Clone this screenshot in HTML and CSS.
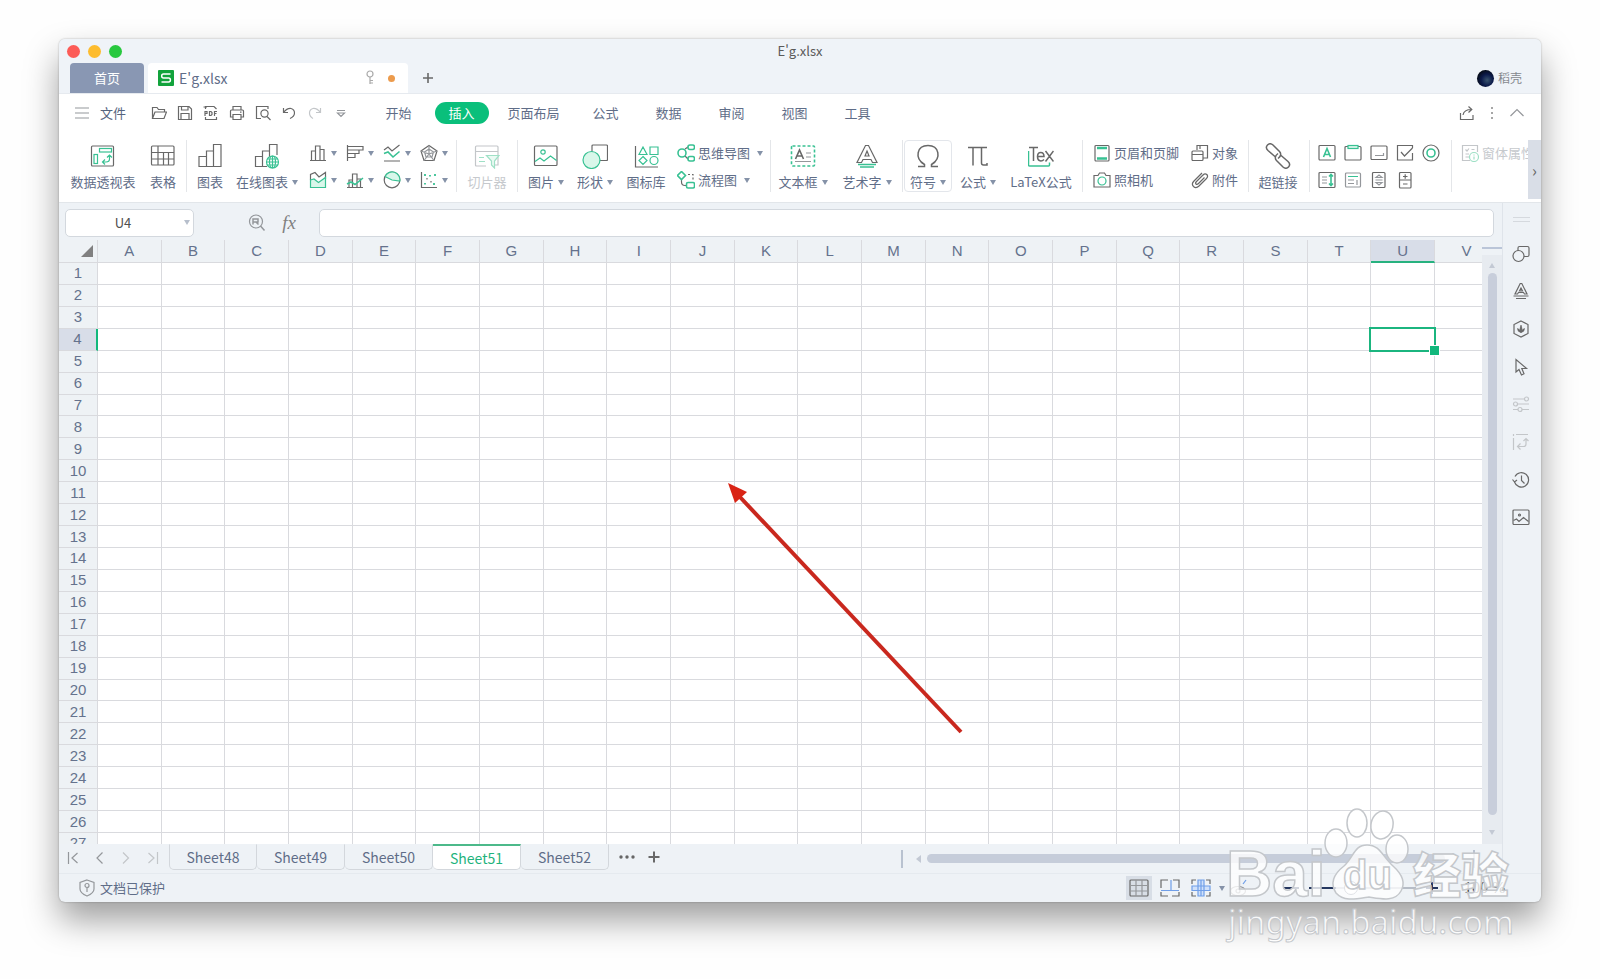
FILE: index.html
```html
<!DOCTYPE html>
<html lang="zh-CN">
<head>
<meta charset="utf-8">
<title>E'g.xlsx</title>
<link rel="stylesheet" href="styles.css">
</head>
<body>
<div class="window">
  <header class="titlebar">
    <div class="lights"><i class="light red"></i><i class="light yellow"></i><i class="light green"></i></div>
    <h1 class="title">E'g.xlsx</h1>
  </header>

  <div class="doc-tabs">
    <button class="home-tab">首页</button>
    <div class="file-tab">
      <svg class="logo" viewBox="0 0 16 16"><rect width="16" height="16" rx="1" fill="#12a33c"/><path d="M12.500 4H5.500Q3.700 4 3.700 6T5.500 8H10.700Q12.400 8 12.400 10T10.700 12H3.500" fill="none" stroke="#fff" stroke-width="1.500"/></svg>
      <span class="file-name">E'g.xlsx</span>
      <svg class="key" viewBox="0 0 10 16"><circle cx="5" cy="4" r="3"/><path d="M5 7V14M5 10.500H8M5 13H8"/></svg>
      <i class="unsaved"></i>
    </div>
    <button class="new-tab" aria-label="新建"><svg class="ic" width="12" height="12" viewBox="0 0 12 12"><path d="M6 1V11M1 6H11" stroke-width="1.600"/></svg></button>
    <button class="account"><i class="avatar"></i>稻壳</button>
  </div>

  <nav class="menubar">
    <button class="file-menu"><svg class="ic soft" width="16" height="14" viewBox="0 0 16 14"><path d="M1 2H15M1 7H15M1 12H15"/></svg>文件</button>
    <div class="quick">
      <button aria-label="打开"><svg class="ic" viewBox="0 0 16 16"><path d="M1.500 13.500V2.500H6L7.500 4.500H13.500V7M1.500 13.500L4 7H15.500L13 13.500Z"/></svg></button>
      <button aria-label="保存"><svg class="ic" viewBox="0 0 16 16"><path d="M1.500 1.500H12L14.500 4V14.500H1.500ZM4.500 1.500V5H11V1.500M4 14.500V8.500H12V14.500"/></svg></button>
      <button aria-label="输出为PDF"><svg class="ic" viewBox="0 0 16 16"><path d="M2.500 4V1.500H11L13.500 4M2.500 12V14.500H13.500V12M0.500 2H4M2 6V11M2 6.500H4V8.500H2M6.500 6.500V10.500H8L9 9.500V7.500L8 6.500ZM11.500 11V6.500H14M11.500 8.500H13.500"/></svg></button>
      <button aria-label="打印"><svg class="ic" viewBox="0 0 16 16"><path d="M4 5V1.500H12V5M4 12H1.500V6Q1.500 5 2.500 5H13.500Q14.500 5 14.500 6V12H12M4 9.500H12V14.500H4ZM11 7.200H12.500"/></svg></button>
      <button aria-label="打印预览"><svg class="ic" viewBox="0 0 16 16"><path d="M6 13.500H1.500V1.500H13V4M12 11.500L15.500 15"/><circle cx="9.500" cy="8.500" r="3.600"/></svg></button>
      <button aria-label="撤销"><svg class="ic" viewBox="0 0 16 16"><path d="M2.500 3V7.500H7M2.500 7.500Q6 3 10 3.500Q13.500 4.500 13.500 8T9 13.500"/></svg></button>
      <button aria-label="恢复"><svg class="ic faint" viewBox="0 0 16 16"><path d="M13.500 3V7.500H9M13.500 7.500Q10 3 6 3.500Q2.500 4.500 2.500 8T6 13.500"/></svg></button>
      <button aria-label="更多"><svg class="ic soft" viewBox="0 0 16 16"><path d="M4 5.500H12M4.500 8L8 11.500L11.500 8Z"/></svg></button>
    </div>
    <div class="menus">
      <button class="menu">开始</button><button class="menu active"><span>插入</span></button><button class="menu wide">页面布局</button><button class="menu">公式</button><button class="menu">数据</button><button class="menu">审阅</button><button class="menu">视图</button><button class="menu">工具</button>
    </div>
    <div class="menu-right">
      <button aria-label="分享"><svg class="ic" width="16" height="16" viewBox="0 0 16 16"><path d="M1.500 8V14.500H14V10M4 10Q5 4.500 12.500 4.500M9.500 1.500L12.800 4.500L9.500 7.500"/></svg></button>
      <button aria-label="选项"><svg width="4" height="16" viewBox="0 0 4 16" fill="#888"><circle cx="2" cy="3" r="1"/><circle cx="2" cy="8" r="1"/><circle cx="2" cy="13" r="1"/></svg></button>
      <button aria-label="收起"><svg class="ic soft" width="16" height="16" viewBox="0 0 16 16"><path d="M1.500 11L8 4.500L14.500 11"/></svg></button>
    </div>
  </nav>

  <div class="ribbon">
    <div class="group g-table">
      <button class="tool w76"><svg class="ic" viewBox="0 0 26 26"><rect x="1.500" y="3" width="22" height="20" rx="1"/><g class="grn"><rect x="9.500" y="5.500" width="12" height="3.500"/><rect x="4" y="11.500" width="3.500" height="9"/><path d="M19.500 12.500V16Q19.500 19 16 19H12.500M17 14.500L19.500 12L22 14.500M15 16.500L12.500 19L15 21.500"/></g></svg><span>数据透视表</span></button>
      <button class="tool w44"><svg class="ic" viewBox="0 0 26 26"><rect x="1.500" y="3" width="22.500" height="19" rx="1"/><path d="M1.500 9.500H24M1.500 16H24M8 3V22M13.500 9.500V22M18.500 9.500V22"/></svg><span>表格</span></button>
    </div>
    <div class="group g-chart">
      <button class="tool w46"><svg class="ic" viewBox="0 0 26 26"><path d="M2 13.500H9.500V23.500H2ZM9.500 8H16.500V23.500H9.500ZM16.500 1.500H24V23.500H16.500Z"/></svg><span>图表</span></button>
      <button class="tool w68"><svg class="ic" viewBox="0 0 26 26"><path d="M13 23.500H1.500V13.500H8.500V23M8.500 13V8H15.500V14M15.500 8V1.500H23V12"/><g class="grn"><circle cx="18.500" cy="19" r="6" fill="#fff"/><path d="M12.500 19H24.500M18.500 13V25M13.500 16H23.500M13.500 22H23.500"/><ellipse cx="18.500" cy="19" rx="3" ry="6"/></g></svg><span class="dd">在线图表</span></button>
      <div class="chart-grid">
        <button class="dd" aria-label="柱形图"><svg class="ic" viewBox="0 0 18 18"><path d="M1 16.500H17M2.500 16.500V7H6.500V16.500M6.500 16.500V2H11V16.500M11 5.500H15V16.500"/></svg></button>
        <button class="dd" aria-label="条形图"><svg class="ic" viewBox="0 0 18 18"><path d="M1.500 1V17M1.500 2.500H17V6H1.500M13 6V9.500H1.500M9 9.500V13.500H1.500"/></svg></button>
        <button class="dd" aria-label="折线图"><svg class="ic" viewBox="0 0 18 18"><path d="M1 6L5 3L9 7L16.500 1M1 17H17"/><path class="grn" d="M1 9.500L5 8L10 13L16.500 7.500" stroke-width="1.600"/></svg></button>
        <button class="dd" aria-label="雷达图"><svg class="ic" viewBox="0 0 18 18"><path d="M9 1.500L17 7L14 16.500H4L1 7Z"/><path class="soft" d="M9 5L13.500 8L12 13H6L4.500 8ZM9 1.500V10M17 7L9 10L14 16.500M1 7L9 10L4 16.500"/></svg></button>
        <button class="dd" aria-label="面积图"><svg class="ic" viewBox="0 0 18 18"><path d="M1.500 9V3.500L6 1.500L10 6L16.500 1.500V8"/><path class="grn" fill="#d9f7ea" d="M1.500 9L5 8L9.500 11.500L16.500 6.500V16.500H1.500Z"/></svg></button>
        <button class="dd" aria-label="组合图"><svg class="ic" viewBox="0 0 18 18"><path d="M1 16.500H17M3 16.500V9H6.500V16.500M6.500 12V3H11V16.500M11 8H14.500V16.500"/><path class="grn" d="M1 13L5 11L9 13.500L17 7" stroke-width="1.600"/></svg></button>
        <button class="dd" aria-label="饼图"><svg class="ic" viewBox="0 0 18 18"><circle cx="9" cy="9" r="7.800"/><path class="grn" fill="#d9f7ea" d="M2 5.500L9 9L16.800 10A7.800 7.800 0 0 0 2 5.500"/></svg></button>
        <button class="dd" aria-label="散点图"><svg class="ic" viewBox="0 0 18 18"><path d="M1.500 1V16.500H17M7 7V8.500M11 10V11.500"/><path class="grn" d="M5 3V5M15 3V5M5 12V13.500M10 4V5.500M14 12V14" stroke-width="1.800"/></svg></button>
      </div>
    </div>
    <div class="group g-slicer">
      <button class="tool w60 off" disabled><svg class="ic faint" viewBox="0 0 26 26"><path d="M12 23H2.500Q1.500 23 1.500 22V4Q1.500 3 2.500 3H23Q24 3 24 4V22H20M1.500 8.500H24"/><path class="grnf" fill="#eafaf3" d="M12.500 12.500H25L20.500 18V25L17.500 22V18Z"/><path class="grnf" d="M5 14.500H10M5 18.500H11"/></svg><span>切片器</span></button>
    </div>
    <div class="group g-insert">
      <button class="tool w48"><svg class="ic" viewBox="0 0 26 26"><rect x="1.500" y="3" width="22.500" height="19.500" rx="1"/><g class="grn"><circle cx="10" cy="9" r="2.200"/><path d="M2 18.500L7 15L11 18L17.500 13L23.500 17.500"/></g></svg><span class="dd">图片</span></button>
      <button class="tool w50"><svg class="ic" viewBox="0 0 26 26"><rect x="10" y="2" width="15.500" height="15.500" rx="1"/><circle class="grn" cx="9.500" cy="17" r="8.500" fill="#d9f7ea"/></svg><span class="dd">形状</span></button>
      <button class="tool w52"><svg class="ic" viewBox="0 0 26 26"><path d="M2.500 3V24H25"/><g class="grn"><path d="M10 4L14 11.500H6ZM17 4H25V11.500H17ZM10 13.500L14 17.500L10 21.500L6 17.500Z"/><circle cx="21" cy="17.500" r="4"/></g></svg><span>图标库</span></button>
      <div class="mini-list">
        <button><svg class="ic" viewBox="0 0 18 18"><path d="M8 5L11 3M8 12L11 15"/><g class="grn bold"><circle cx="5" cy="9" r="4"/><rect x="11" y="1" width="6.500" height="4.500" rx="2"/><rect x="11" y="12.500" width="6.500" height="4.500" rx="2"/></g></svg><span class="dd far">思维导图</span></button>
        <button><svg class="ic" viewBox="0 0 18 18"><path d="M4.500 8V11Q4.500 14.500 8 14.500H9"/><path d="M11 3.500H16V9" stroke-dasharray="2 2"/><g class="grn bold"><path d="M4.500 0.500L8.500 4.500L4.500 8.500L0.500 4.500Z"/><rect x="9.500" y="11.500" width="8" height="5.500" rx="1.500"/></g></svg><span class="dd far">流程图</span></button>
      </div>
    </div>
    <div class="group g-text">
      <button class="tool w64"><svg class="ic" viewBox="0 0 26 26"><rect class="grn" x="1.500" y="3" width="23" height="20" rx="1" stroke-width="1.600" stroke-dasharray="3 2"/><path d="M5.500 16L9.500 7L13.500 16M7 13H12" stroke-width="1.600"/><path class="soft" d="M16 10H21M16 14H21M5 18.500H21"/></svg><span class="dd">文本框</span></button>
      <button class="tool w64"><svg class="ic" viewBox="0 0 26 26"><path d="M11.500 2.500H14.500L23 19.500H18.500L17 16.500H9L7.500 19.500H3ZM13 8L15 13H11Z"/><path class="grn" d="M4 21.500H22M6 24H20" stroke-width="1.600"/></svg><span class="dd">艺术字</span></button>
    </div>
    <div class="group g-symbol">
      <button class="tool w48 boxed"><svg class="ic" viewBox="0 0 26 26"><path d="M3 23.500H9.500V21.500C-1 15 2 2.500 13 2.500S27 15 16.500 21.500V23.500H23" stroke-width="1.500"/></svg><span class="dd">符号</span></button>
      <button class="tool w52"><svg class="ic" viewBox="0 0 26 26"><path d="M3 4.500H22M8 4.500V22.500M16.500 4.500V20Q16.500 22 18.500 22H22V20" stroke-width="1.500"/></svg><span class="dd">公式</span></button>
      <button class="tool w74"><svg class="ic" viewBox="0 0 26 26"><path class="grn" d="M0.500 8V22Q0.500 23 1.500 23H20.500Q21.500 23 21.500 22V19.500" stroke-width="1.500"/><path d="M1 4.500H10M5.500 4.500V18M9.500 13.500H16C16 8 9.500 8 9.500 13.500S14 18.500 16 16.500M17.500 8L25.500 18.500M25.500 8L17.500 18.500" stroke-width="1.500"/></svg><span>LaTeX公式</span></button>
    </div>
    <div class="group g-page">
      <div class="mini-list">
        <button><svg class="ic" viewBox="0 0 18 18"><rect x="2" y="1.500" width="14" height="15.500" rx="1"/><path class="grn" d="M4 4H14M4 14.500H14" stroke-width="2.500"/></svg><span>页眉和页脚</span></button>
        <button><svg class="ic" viewBox="0 0 18 18"><path d="M1 4.500H5L6.500 2H11.500L13 4.500H17V16H1Z"/><circle class="grn" cx="9" cy="10" r="4"/></svg><span>照相机</span></button>
      </div>
      <div class="mini-list objects">
        <button><svg class="ic" viewBox="0 0 18 18"><path d="M6 6V1.500H16.500V14H12M9 1.500V5"/><rect x="1" y="7" width="11" height="9.500" rx="1"/><path d="M1 10.500H12"/></svg><span>对象</span></button>
        <button><svg class="ic" viewBox="0 0 18 18"><path d="M13.500 6.500L7.500 12.500Q6 14 5 13Q4 12 5.500 10.500L12 4Q14 2 15.800 3.500Q17.500 5.500 15.500 7.500L8 15Q5 17.800 2.500 15.500Q0 13 3 10L11 2"/></svg><span>附件</span></button>
      </div>
    </div>
    <div class="group g-link">
      <button class="tool w58"><svg class="ic" viewBox="0 0 26 26"><path d="M10.500 14L3 7.500Q0 4.500 2.500 2Q5 -0.500 8 2L14.500 8.500Q17.500 12 13 15.500M15.500 12L23 18.500Q26 21.500 23.500 24Q21 26.500 18 24L11.500 17.500Q8.500 14 13 10.500" stroke-width="1.500"/></svg><span>超链接</span></button>
    </div>
    <div class="group g-form">
      <div class="form-grid">
        <button aria-label="标签"><svg class="ic" viewBox="0 0 18 18"><rect x="1" y="1.500" width="16" height="14.500" rx="1"/><path class="grn" d="M5.500 13L9 4.500L12.500 13M6.500 10.500H11.500" stroke-width="1.600"/></svg></button>
        <button aria-label="分组框"><svg class="ic" viewBox="0 0 18 18"><rect x="1" y="2.500" width="16" height="13.500" rx="1"/><rect class="grn" x="4" y="1.500" width="10" height="3" fill="#d9f7ea"/></svg></button>
        <button aria-label="按钮"><svg class="ic" viewBox="0 0 18 18"><rect x="1" y="2" width="16" height="13.500" rx="1"/><path class="soft" d="M5 11.500H13.500V9"/></svg></button>
        <button aria-label="复选框"><svg class="ic" viewBox="0 0 18 18"><path d="M16.500 9V16H1.500V1.500H16.500V4M5 8L8.500 12L16.500 4"/></svg></button>
        <button aria-label="选项按钮"><svg class="ic" viewBox="0 0 18 18"><circle cx="9" cy="9" r="8"/><circle class="grn" cx="9" cy="9" r="4" stroke-width="1.600"/></svg></button>
        <button aria-label="列表框"><svg class="ic" viewBox="0 0 18 18"><rect x="1" y="1.500" width="16" height="15" rx="1"/><path class="soft" d="M4 6H9M4 9H9M4 12H9"/><path class="grn" d="M13 3.500V14.500M11 5.500L13 3.500L15 5.500M11 12.500L13 14.500L15 12.500" stroke-width="1.600"/></svg></button>
        <button aria-label="组合框"><svg class="ic soft" viewBox="0 0 18 18"><rect x="1.500" y="2" width="15" height="14" rx="1"/><path d="M4 9H10M4 12.500H10M13 9V14"/><path class="grn" d="M4 5.500H14"/></svg></button>
        <button aria-label="滚动条"><svg class="ic" viewBox="0 0 18 18"><rect x="2.500" y="1.500" width="12.500" height="15" rx="1"/><path class="soft" d="M6 6.500L9 4L12 6.500ZM6 11.500L9 14L12 11.500ZM5.500 9H12.500"/></svg></button>
        <button aria-label="微调项"><svg class="ic" viewBox="0 0 18 18"><rect x="3.500" y="1.500" width="11.500" height="15.500" rx="1"/><path d="M3.500 9H15M7 5.500H11.500M9.200 3.200V7.800M7 13H11.500"/></svg></button>
      </div>
    </div>
    <div class="group g-props">
      <div class="mini-list">
        <button class="off" disabled><svg class="ic faint" viewBox="0 0 18 18"><path d="M9 16.500H1.500V1.500H16.500V8M4.500 5.500L6 7L8 4.500M10.500 5.500H13.500M4.500 10H8M4.500 13H8"/><circle class="grnf" cx="13" cy="13" r="4.500" fill="#fff"/><path class="grnf" d="M13 12.500V15.500M13 10.500V11.500"/></svg><span>窗体属性</span></button>
      </div>
    </div>
    <button class="ribbon-next" aria-label="向右滚动">›</button>
  </div>

  <div class="body">
    <main class="main">
      <div class="formula-bar">
        <div class="name-box"><input type="text" value="U4" aria-label="名称框"><i class="tri"></i></div>
        <button class="find" aria-label="查找"><svg class="ic soft" width="18" height="18" viewBox="0 0 18 18"><circle cx="8" cy="7.500" r="6.500"/><path d="M5 10.500V5H10V8H5M8 8L10.500 10.500M12.500 12L16.500 16.500" stroke-width="1.500"/></svg></button>
        <button class="fx" aria-label="插入函数">fx</button>
        <input class="formula" type="text" aria-label="编辑栏">
      </div>
      <div class="sheet-area">
        <div class="sheet">
          <table class="grid" id="grid"></table>
          <svg class="arrow" width="236" height="254" viewBox="0 0 236 254"><path d="M11 13L233 249" stroke="#c9281e" stroke-width="4"/><path d="M0 0L19 9L7 20Z" fill="#d92415"/></svg>
        </div>
        <div class="vscroll"><i class="split-line"></i><div class="vtrack"><i class="tri up"></i><i class="vthumb"></i><i class="tri"></i></div></div>
      </div>
      <div class="sheet-bar">
        <div class="sheet-nav">
          <button aria-label="第一张"><svg class="ic soft" viewBox="0 0 12 14"><path d="M1.500 1V13M10.500 2L5 7L10.500 12"/></svg></button>
          <button aria-label="上一张"><svg class="ic soft" viewBox="0 0 12 14"><path d="M8.500 1.500L3 7L8.500 12.500"/></svg></button>
          <button aria-label="下一张"><svg class="ic faint" viewBox="0 0 12 14"><path d="M3 1.500L8.500 7L3 12.500"/></svg></button>
          <button aria-label="最后一张"><svg class="ic faint" viewBox="0 0 12 14"><path d="M10.500 1V13M1.500 2L7 7L1.500 12"/></svg></button>
        </div>
        <div class="sheets"><button>Sheet48</button><button>Sheet49</button><button>Sheet50</button><button class="current">Sheet51</button><button>Sheet52</button></div>
        <button class="more" aria-label="更多工作表"><svg width="18" height="4" viewBox="0 0 18 4" fill="#666"><circle cx="3" cy="2" r="1.700"/><circle cx="9" cy="2" r="1.700"/><circle cx="15" cy="2" r="1.700"/></svg></button>
        <button class="add" aria-label="新建工作表"><svg class="ic" width="12" height="12" viewBox="0 0 12 12"><path d="M6 0.500V11.500M0.500 6H11.500" stroke-width="2"/></svg></button>
        <div class="hscroll"><i class="bar"></i><i class="tri left"></i><i class="hthumb"></i><i class="bar end"></i></div>
      </div>
    </main>
    <aside class="sidebar">
      <i class="grip"></i>
      <div class="side-tools">
        <button aria-label="形状"><svg class="ic" viewBox="0 0 18 18"><path d="M6 6V3Q6 1.500 7.500 1.500H15.500Q17 1.500 17 3V10Q17 11.500 15.500 11.500H12"/><circle cx="6.500" cy="11" r="5.500"/></svg></button>
        <button aria-label="艺术字"><svg class="ic" viewBox="0 0 18 18"><path d="M8.200 1.500H9.800L15 12H12.500L11.500 10.500H6.500L5.500 12H3ZM9 6L10.500 9H7.500ZM1.500 14H16.500M4 16.500H14"/></svg></button>
        <button aria-label="样式"><svg class="ic" viewBox="0 0 18 18"><path d="M9 1L16 4.500V13.500L9 17L2 13.500V4.500Z"/><path d="M9 12.500Q7 9 9 5Q11 9 9 12.500Q5.500 12 5.500 8.500Q8 9 9 12.500Q12.500 12 12.500 8.500Q10 9 9 12.500" fill="#666" stroke-width="0.600"/></svg></button>
        <button aria-label="选择"><svg class="ic" viewBox="0 0 18 18"><path d="M4 1.500V14L7 11.500L9.500 17L12 15.800L9.800 10.500H14.500Z"/></svg></button>
        <button aria-label="筛选" disabled><svg class="ic faint" viewBox="0 0 18 18"><path d="M1 4H12.500M5.500 9H17M1 9H1.500M1 14.500H6M10 14.500H17"/><circle cx="14.500" cy="4" r="2"/><circle cx="3.500" cy="9" r="2"/><circle cx="8" cy="14.500" r="2"/></svg></button>
        <button aria-label="透视表" disabled><svg class="ic faint" viewBox="0 0 18 18"><path d="M1.500 1V3M4 1.500H16M1.500 5V17M14 6V11Q14 13.500 11.500 13.500H6M11.500 8L14 5.500L16.500 8M8.500 10.500L5.500 13.500L8.500 16.500"/></svg></button>
        <button aria-label="历史"><svg class="ic" viewBox="0 0 18 18"><path d="M2.500 11A7.200 7.200 0 1 0 3 5.500M0.500 8.500L2.500 11L5 9M9.500 4.500V9.500L12.500 12.500"/></svg></button>
        <button aria-label="图片"><svg class="ic" viewBox="0 0 18 18"><rect x="1" y="2" width="16" height="14.500" rx="1"/><circle cx="7.500" cy="7" r="1"/><path d="M1.500 12.500L4.500 11L7 13.500L11.500 9.500L16.500 13.500"/></svg></button>
      </div>
    </aside>
  </div>

  <footer class="status">
    <svg class="ic soft shield" width="16" height="18" viewBox="0 0 16 18"><path d="M8 1L15 3.500V10Q15 14 8 17Q1 14 1 10V3.500ZM8 8.500V13"/><circle cx="8" cy="6.500" r="2"/></svg>
    <span>文档已保护</span>
    <div class="views">
      <button class="view on" aria-label="普通视图"><svg class="ic" width="20" height="18" viewBox="0 0 20 18"><rect x="1" y="1" width="18" height="16" rx="1"/><path class="soft" d="M1 6.500H19M1 12H19M7 1V17M13 1V17"/></svg></button>
      <button class="view" aria-label="分页预览"><svg class="ic" width="20" height="18" viewBox="0 0 20 18"><path d="M8 1H1V9M1 13V17H8M12 17H19V13M19 9V1H13"/><path class="blu" d="M11 1V11.500M1 11.500H19"/></svg></button>
      <button class="view" aria-label="阅读模式"><svg class="ic" width="20" height="18" viewBox="0 0 20 18"><path d="M5 1H1V5M1 13V17H5M15 1H19V5M19 13V17H15"/><path class="blu" fill="#cfe0fa" d="M7 1H13V17H7ZM1 7H19V11.500H1ZM10 1V17"/></svg></button>
      <i class="tri"></i>
      <button class="eye" aria-label="护眼模式"><svg class="ic soft" width="18" height="18" viewBox="0 0 18 18"><ellipse cx="8" cy="12" rx="7.500" ry="4.500"/><circle cx="8" cy="12" r="2"/><path class="blu" d="M13 5L16 1"/></svg></button>
    </div>
    <div class="zoom">
      <button aria-label="缩小"><svg width="16" height="12" viewBox="0 0 16 12"><path d="M0 6H16" stroke="#24365f" stroke-width="2"/></svg></button>
      <input type="range" min="0" max="100" value="38" aria-label="缩放">
      <button aria-label="放大"><svg width="12" height="12" viewBox="0 0 12 12"><path d="M0 6H12M6 0V12" stroke="#24365f" stroke-width="2"/></svg></button>
      <output>100 %</output>
    </div>
  </footer>
</div>

<div class="watermark">
  <svg width="300" height="174" viewBox="0 0 300 174">
    <g class="mark">
      <text class="wm-latin" x="1" y="91">Bai</text>
      <ellipse cx="111" cy="38" rx="11" ry="14"/><ellipse cx="132" cy="18" rx="10" ry="14"/><ellipse cx="157" cy="20" rx="11" ry="14" transform="rotate(12 157 20)"/><ellipse cx="172" cy="44" rx="11" ry="14"/>
      <path d="M142 40C155 40 157 51 168 61C178 70 180 79 176 86C170 97 157 94 144 92C131 94 119 97 111 88C104 77 110 68 119 61C129 52 129 40 142 40Z"/>
      <text class="wm-du" x="118" y="84">du</text>
      <text class="wm-cjk" x="188" y="88">经验</text>
      <text class="wm-url" x="3" y="129">jingyan.baidu.com</text>
    </g>
  </svg>
</div>
<script src="sheet.js"></script>
</body>
</html>
```

FILE: styles.css
```css
* { box-sizing: border-box; }

body {
  margin: 0;
  height: 100vh;
  padding: 39px 59px 77px;
  background: #fefefe;
  font: 13px/18px "Noto Sans CJK SC", sans-serif;
  color: #5f6d88;
  overflow: hidden;
}

button, input {
  font: inherit;
  color: inherit;
  margin: 0;
  padding: 0;
  border: 0;
  background: none;
}

button { display: flex; align-items: center; justify-content: center; white-space: nowrap; flex: none; }
svg { display: block; flex: none; }

.ic { fill: none; stroke: #686868; stroke-width: 1.2; }
.ic.soft, .ic .soft { stroke: #94979b; }
.ic.faint { stroke: #c3c6c9; }
.ic .grn { stroke: #38c193; }
.ic .grnf { stroke: #9fe0c6; }
.ic .blu { stroke: #6f9ee8; }
.ic .bold { stroke-width: 1.6; }

.tri {
  width: 0;
  height: 0;
  border: 3px solid transparent;
  border-top: 5px solid #8592a8;
  border-bottom: 0;
}
.tri.left { border: 4px solid transparent; border-right: 5px solid #c3c9d4; border-left: 0; }

.window {
  display: flex;
  flex-direction: column;
  height: 100%;
  background: #eef2f6;
  border-radius: 6px;
  overflow: hidden;
  box-shadow: 0 0 2px rgba(0, 0, 0, .3), 0 18px 34px rgba(0, 0, 0, .38);
}

/* Title bar and document tabs */
.titlebar { display: grid; grid-template-columns: 1fr auto 1fr; height: 24px; align-items: center; background: #eff3f8; }
.lights { display: flex; gap: 8px; padding-left: 8px; }
.light { width: 13px; height: 13px; border-radius: 50%; }
.red { background: #fc5b57; }
.yellow { background: #fdbc2f; }
.green { background: #28c83f; }
.title { margin: 0; font-size: 13px; font-weight: 400; color: #5a5a5a; }

.doc-tabs { display: flex; align-items: flex-end; height: 31px; padding: 0 19px 0 11px; background: #eff3f8; border-bottom: 1px solid #e6eaef; }
.home-tab { width: 74px; height: 30px; background: #8997b3; color: #fff; border-radius: 4px 4px 0 0; }
.file-tab { display: flex; align-items: center; width: 260px; height: 30px; margin-left: 4px; padding: 0 13px 0 10px; background: #fff; border-radius: 4px 4px 0 0; }
.logo { width: 16px; height: 16px; }
.file-name { flex: 1; margin-left: 5px; font-size: 14px; }
.key { width: 10px; height: 16px; fill: none; stroke: #aaa; stroke-width: 1.2; }
.unsaved { width: 7px; height: 7px; margin-left: 13px; border-radius: 50%; background: #ec9b4d; }
.new-tab { width: 40px; height: 30px; }
.account { height: 30px; gap: 4px; margin-left: auto; font-size: 12px; color: #85888e; }
.avatar { width: 17px; height: 17px; border-radius: 50%; background: radial-gradient(circle at 60% 60%, #39546e 0, #0c1a4a 40%, #050a14 75%); }

/* Menu row */
.menubar { display: flex; align-items: center; height: 38px; padding: 0 16px 0 15px; background: #fff; }
.file-menu { gap: 10px; color: #56647e; }
.quick { display: flex; margin-left: 25px; gap: 10px; }
.quick svg { width: 16px; height: 16px; }
.menus { display: flex; margin-left: 18px; }
.menu { width: 63px; height: 21px; }
.menu.wide { width: 81px; }
.menu.active span { padding: 2px 14px; line-height: 18px; border-radius: 11px; background: #0abf7b; color: #fff; }
.menu-right { display: flex; align-items: center; gap: 15px; margin-left: auto; }

/* Ribbon */
.ribbon { display: flex; height: 71px; padding-top: 8px; background: #fff; border-bottom: 1px solid #e2e6ea; }
.group { display: flex; flex: none; height: 52px; border-right: 1px solid #e4e6e9; }
.tool { flex-direction: column; justify-content: flex-start; gap: 4px; height: 52px; padding-top: 3px; }
.tool svg { width: 26px; height: 26px; }
.w44 { width: 44px; }
.w46 { width: 46px; }
.w48 { width: 48px; }
.w50 { width: 50px; }
.w52 { width: 52px; }
.w58 { width: 58px; }
.w60 { width: 60px; }
.w64 { width: 64px; }
.w68 { width: 68px; }
.w74 { width: 74px; }
.w76 { width: 76px; }
.off { color: #c6c9cd; }
.boxed { border: 1px solid #e3e6eb; border-radius: 4px; padding-top: 2px; }

.dd { display: flex; align-items: center; }
.dd::after { content: ""; margin-left: 4px; border: 3px solid transparent; border-top: 5px solid #8592a8; border-bottom: 0; }
.dd.far::after { margin-left: 7px; }

.g-table { width: 128px; padding-left: 6px; }
.g-chart { width: 270px; }
.g-slicer { width: 61px; }
.g-insert { width: 253px; padding-left: 4px; }
.g-text { width: 132px; }
.g-symbol { width: 180px; padding-left: 1px; }
.g-page { width: 166px; padding-left: 10px; }
.g-link { width: 61px; }
.g-form { width: 142px; padding-left: 8px; }
.g-props { flex: 1 1 0; width: 0; padding-left: 9px; border-right: 0; overflow: hidden; }

.chart-grid { display: grid; grid-template-columns: repeat(4, 27px); gap: 1px 10px; grid-auto-rows: 26px; margin-left: 8px; }
.chart-grid svg, .form-grid svg, .mini-list svg { width: 18px; height: 18px; }
.chart-grid .dd::after { margin-left: 4px; }
.mini-list { display: grid; grid-auto-rows: 26px; gap: 1px; justify-items: start; align-content: start; margin-left: 5px; }
.mini-list button { gap: 3px; }
.g-page .mini-list, .g-props .mini-list { margin-left: 0; }
.g-page .objects { margin-left: 12px; }
.form-grid { display: grid; grid-template-columns: repeat(5, 18px); gap: 1px 8px; grid-auto-rows: 26px; }
.ribbon-next { width: 13px; height: 59px; background: #d9dee7; font-size: 16px; color: #666; }

/* Workspace */
.body { display: flex; flex: 1; min-height: 0; }
.main { display: flex; flex-direction: column; flex: 1; min-width: 0; }
.formula-bar { display: flex; align-items: center; height: 37px; padding: 2px 8px 0 6px; }
.name-box { display: flex; align-items: center; width: 129px; height: 28px; padding-right: 3px; background: #fff; border: 1px solid #d3d8de; border-radius: 5px; }
.name-box input { flex: 1; min-width: 0; padding-right: 4px; text-align: center; font-size: 13px; color: #505050; }
.name-box .tri { border-top-color: #b7bfcc; }
.find { margin-left: 54px; }
.fx { width: 32px; margin-left: 7px; font: italic 19px/24px "Liberation Serif", serif; color: #808080; }
.formula { flex: 1; height: 28px; margin-left: 14px; padding: 0 8px; background: #fff; border: 1px solid #d3d8de; border-radius: 5px; }

.sheet-area { display: flex; flex: 1; min-height: 0; }
.sheet { position: relative; flex: 1; min-width: 0; overflow: hidden; }
.grid { width: calc(100% + 17px); height: calc(100% + 11px); table-layout: fixed; border-collapse: separate; border-spacing: 0; background: #fff; font: 15px/18px "Liberation Sans", Arial, sans-serif; color: #65728d; }
.grid th, .grid td { padding: 0; border: 0 solid #d9dade; border-width: 0 1px 1px 0; font-weight: 400; }
.grid thead th { height: 23px; background: linear-gradient(#eef2f5, rgba(238, 242, 245, 0)) right / 1px 100% no-repeat, #eef2f5; background-origin: border-box; }
.grid .corner { width: 39px; }
.grid tbody th { background: #eef2f5; }
.grid thead .picked { background: #d8dde8; border-bottom: 2px solid #27b27f; }
.grid tbody .picked { background: #d8dde8; border-right: 2px solid #12b87c; }
.corner i { display: block; width: 0; height: 0; margin-left: 22px; border-bottom: 12px solid #808080; border-left: 12px solid transparent; }
.grid .cell-active { position: relative; }
.cell-active::before { content: ""; position: absolute; inset: -2px; border: 2px solid #1bb57f; }
.cell-active::after { content: ""; position: absolute; right: -6px; bottom: -6px; width: 9px; height: 9px; background: #12b87c; border: 1px solid #fff; }
.arrow { position: absolute; left: 669px; top: 243px; fill: none; }

.vscroll { display: flex; flex-direction: column; width: 20px; padding-top: 7px; gap: 6px; }
.split-line { height: 2px; background: #bac5d8; }
.vtrack { display: flex; flex-direction: column; align-items: center; flex: 1; padding: 8px 0 9px; gap: 5px; background: #e7ebf0; }
.vthumb { flex: 1; width: 9px; margin-bottom: 10px; border-radius: 5px; background: #c8cedb; }
.vtrack .tri { border-top-color: #c3c9d4; }
.vtrack .tri.up { border-top: 0; border-bottom: 5px solid #c3c9d4; }

.sheet-bar { display: flex; align-items: flex-start; height: 29px; }
.sheet-nav { display: flex; align-items: center; justify-content: space-between; width: 109px; height: 27px; padding: 0 9px 0 8px; }
.sheet-nav svg { width: 12px; height: 14px; }
.sheets { display: flex; margin-left: 1px; }
.sheets button { width: 88px; height: 26px; font-size: 14px; border: 1px solid #d3d7dc; border-top-color: #eef2f6; border-left-width: 0; border-radius: 0 0 5px 5px; }
.sheets button:first-child { border-left-width: 1px; }
.sheets .current { background: #fff; color: #1fb37d; border-top: 2px solid #4cb98a; }
.more { height: 26px; margin-left: 9px; }
.add { height: 26px; margin-left: 12px; }
.hscroll { display: flex; align-items: center; flex: 1; height: 29px; margin-left: 241px; padding-right: 27px; }
.bar { width: 2px; height: 18px; background: #b9c2d0; }
.hscroll .tri { margin: 0 6px 0 13px; }
.hthumb { flex: 1; height: 9px; border-radius: 5px; background: #c6cdda; }
.bar.end { margin-left: 28px; }

.sidebar { display: flex; flex-direction: column; align-items: center; width: 39px; padding-right: 2px; border-left: 1px solid #dfe4ea; }
.grip { width: 17px; height: 5px; margin: 14px 0 13px; border: 1px solid #d5d9de; border-width: 1px 0; }
.side-tools { display: grid; grid-auto-rows: 1fr; height: 301px; }
.side-tools svg { width: 18px; height: 18px; }

/* Status bar */
.status { display: flex; align-items: center; height: 29px; padding: 0 37px 0 20px; border-top: 1px solid #e5eaef; }
.shield { margin-right: 5px; }
.views { display: flex; align-items: center; margin-left: auto; }
.view { width: 26px; height: 24px; margin-right: 5px; }
.views .on { background: #d8dee6; }
.eye { margin-left: 5px; }
.zoom { display: flex; align-items: center; gap: 10px; margin-left: 35px; }
.zoom input { appearance: none; width: 107px; height: 2px; background: linear-gradient(90deg, #24365f 25%, #b6bcc6 25%); }
.zoom input::-webkit-slider-thumb { appearance: none; width: 14px; height: 14px; border: 1px solid #70798c; border-radius: 50%; background: #fff; }
.zoom output { width: 40px; margin-left: 16px; font: 16px/18px "Liberation Serif", serif; color: #444; white-space: nowrap; }

/* Watermark lies over the window corner */
.watermark { position: absolute; right: 75px; bottom: 0; pointer-events: none; }
.mark { fill: rgba(255, 255, 255, .78); stroke: #c4c7cb; stroke-width: 1.5; }
.wm-latin { font: 700 64px "Liberation Sans", sans-serif; }
.wm-du { font: 700 40px "Liberation Sans", sans-serif; }
.wm-cjk { font: 900 48px "Noto Sans CJK SC", sans-serif; }
.wm-url { font: 33px "Noto Sans", sans-serif; stroke-width: 1; fill: rgba(255, 255, 255, .9); }
```

FILE: sheet.js
```js
const columns = 'ABCDEFGHIJKLMNOPQRSTUV'.split('');
const active = { column: 'U', row: 4 };

const head = columns
  .map(c => `<th scope="col"${c === active.column ? ' class="picked"' : ''}>${c}</th>`)
  .join('');

let rows = '';
for (let r = 1; r <= 27; r++) {
  const picked = r === active.row;
  const cells = columns
    .map(c => (picked && c === active.column ? '<td class="cell-active"></td>' : '<td></td>'))
    .join('');
  rows += `<tr><th scope="row"${picked ? ' class="picked"' : ''}>${r}</th>${cells}</tr>`;
}

document.getElementById('grid').innerHTML =
  `<thead><tr><th class="corner"><i></i></th>${head}</tr></thead><tbody>${rows}</tbody>`;
```
